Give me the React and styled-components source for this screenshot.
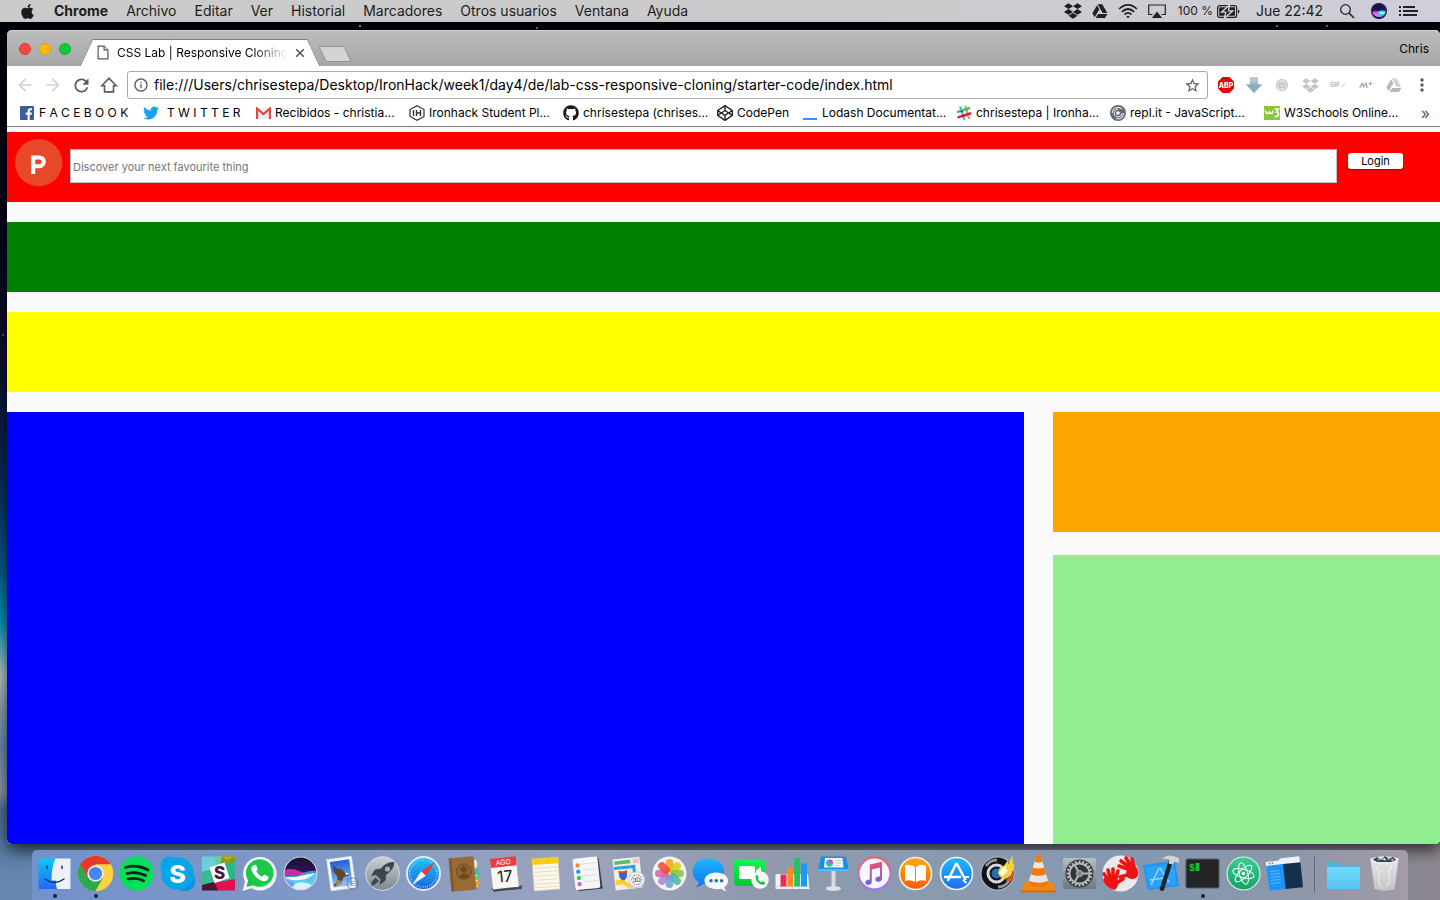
import React from "react";
import styled, { createGlobalStyle } from "styled-components";
import { FaApple, FaDropbox, FaGithub, FaTwitter, FaCodepen } from "react-icons/fa";
import { MdArrowBack, MdArrowForward, MdRefresh, MdStarBorder, MdInfoOutline, MdMoreVert } from "react-icons/md";

const GlobalStyle = createGlobalStyle`
  *, *::before, *::after { box-sizing: border-box; }
  body { margin: 0; font-family: Inter, "Liberation Sans", sans-serif; color: #000; }
  button, input { font: inherit; color: inherit; }
  button { border: 0; padding: 0; background: none; }
  a { color: inherit; text-decoration: none; }
  svg { display: block; flex: none; }
`;

const Desktop = styled.div`
  min-height: 100vh;
  display: flex;
  flex-direction: column;
  overflow: hidden;
  background:
    radial-gradient(circle at 360px 26px, #8a8a99 0 1px, transparent 1px),
    radial-gradient(circle at 537px 28px, #5b6aa0 0 1px, transparent 1px),
    radial-gradient(circle at 1277px 26px, #6b6ba8 0 1px, transparent 1px),
    radial-gradient(circle at 1327px 26px, #6060b0 0 1px, transparent 1px),
    radial-gradient(circle at 3px 335px, #55566e 0 1px, transparent 1px),
    linear-gradient(to right, transparent, #8c8791) bottom / 100% 80px no-repeat,
    linear-gradient(to bottom, #020106 0%, #05041a 25%, #0c1233 42%, #0c2e5c 54%, #075c8c 63%,
      #0496ba 69%, #b4cbcd 75%, #8ca3b5 79%, #6d8cae 83%, #919ab0 88%, #4d7098 90%, #6688b0 98%);
`;

/* ---------- menu bar ---------- */

const MenuBar = styled.header`
  height: 22px;
  display: flex;
  align-items: center;
  justify-content: space-between;
  padding: 0 22px 0 19px;
  background: linear-gradient(to right, #cbcbcb, #cbcbcd 60%, #cfced9);
  color: #1c1c1c;
  font-size: 14px;
  line-height: 22px;
  white-space: nowrap;
`;

const MenuGroup = styled.nav`
  display: flex;
  align-items: center;
  gap: 18px;
`;

const MenuItem = styled.button`
  font-weight: ${(p) => (p.$strong ? 700 : 400)};
`;

const StatusGroup = styled.div`
  display: flex;
  align-items: center;
  gap: ${(p) => p.$gap}px;
`;

const Percent = styled.span`
  font-size: 12px;
`;

const Clock = styled.time`
  font-weight: 400;
`;

/* ---------- browser window ---------- */

const BrowserWindow = styled.main`
  flex: 1;
  display: flex;
  flex-direction: column;
  margin: 8px 0 6px 7px;
  border-radius: 5px;
  overflow: hidden;
  background: #fff;
  box-shadow: 0 6px 16px rgba(0, 0, 0, 0.7);
`;

const TabStrip = styled.div`
  height: 36px;
  display: flex;
  align-items: flex-end;
  padding: 0 11px 0 12px;
  border-top: 1px solid #d2d2d2;
  background: linear-gradient(#bcbcbc, #a6a6a6);
  font-size: 12px;
`;

const Lights = styled.div`
  display: flex;
  gap: 8px;
  align-self: center;
  margin-right: 15px;
`;

const Light = styled.button`
  width: 12px;
  height: 12px;
  border-radius: 50%;
  background: ${(p) => p.$color};
  border: 1px solid ${(p) => p.$edge};
`;

const Tab = styled.div`
  position: relative;
  isolation: isolate;
  width: 228px;
  height: 27px;
  display: flex;
  align-items: center;
  padding: 0 9px 0 11px;
  &::before, &::after {
    content: "";
    position: absolute;
    z-index: -1;
    top: 0;
    bottom: 0;
    width: 60%;
    background: #fff;
    border-top: 1px solid #808080;
  }
  &::before { left: 0; transform: skewX(-25deg); border-left: 1px solid #808080; }
  &::after { right: 0; transform: skewX(25deg); border-right: 1px solid #808080; }
`;

const TabTitle = styled.span`
  flex: 1;
  margin: 0 8px;
  white-space: nowrap;
  overflow: hidden;
  mask-image: linear-gradient(to right, #000 80%, transparent);
`;

const CloseTab = styled.button`
  display: flex;
`;

const NewTab = styled.button`
  width: 26px;
  height: 16px;
  margin: 0 auto 4px 8px;
  border: 1px solid #949494;
  border-radius: 2px;
  background: #d3d3d3;
  transform: skewX(25deg);
`;

const Profile = styled.button`
  align-self: center;
`;

const Toolbar = styled.div`
  display: flex;
  align-items: center;
  padding: 5px 4px 2px;
`;

const ToolButton = styled.button`
  width: 28px;
  height: 28px;
  display: flex;
  align-items: center;
  justify-content: center;
  color: ${(p) => (p.$off ? "#d3d3d3" : "#5a5a5a")};
`;

const AddressBar = styled.label`
  flex: 1;
  height: 28px;
  display: flex;
  align-items: center;
  gap: 5px;
  margin: 0 4px;
  padding: 0 6px 0 5px;
  border: 1px solid #a9a9a9;
  border-radius: 3px;
  color: #5a5a5a;
`;

const AddressInput = styled.input`
  flex: 1;
  min-width: 0;
  padding: 0 0 2px;
  border: 0;
  outline: 0;
  color: #000;
  font-size: 14px;
`;

const Bookmarks = styled.nav`
  height: 26px;
  display: flex;
  align-items: center;
  padding: 0 10px 2px 13px;
  border-bottom: 1px solid #7f7f7f;
  font-size: 12px;
  white-space: nowrap;
`;

const Bookmark = styled.a`
  flex: 0 0 ${(p) => p.$width}px;
  display: flex;
  align-items: center;
  gap: ${(p) => p.$gap || 4}px;
`;

const MoreBookmarks = styled.button`
  margin-left: auto;
  color: #5a5a5a;
  font-size: 16px;
  line-height: 16px;
`;

/* ---------- page in the browser ---------- */

const Page = styled.div`
  flex: 1;
  display: flex;
  flex-direction: column;
  gap: 20px;
  padding-top: 5px;
  background: #fafafa;
`;

const SiteHeader = styled.header`
  height: 70px;
  display: flex;
  align-items: flex-start;
  padding: 7px 37px 0 8px;
  background: red;
  font-size: 11px;
`;

const SearchBox = styled.input`
  flex: 1;
  height: 34px;
  margin: 10px 11px 0 7px;
  padding: 1px 2px 0;
  border: 1px solid #c0c0c0;
  border-radius: 0;
  outline: 0;
  background: #fff;
  &::placeholder { color: #757575; opacity: 1; }
`;

const LoginButton = styled.button`
  width: 55px;
  height: 16px;
  margin-top: 14px;
  border-radius: 3px;
  background: #fff;
  box-shadow: 0 1px 1px rgba(0, 0, 0, 0.35);
  line-height: 16px;
`;

const Band = styled.section`
  height: ${(p) => p.$height}px;
  background: ${(p) => p.$color};
`;

const Columns = styled.div`
  flex: 1;
  display: flex;
  justify-content: space-between;
`;

const MainColumn = styled.section`
  width: 71%;
  background: blue;
`;

const SideColumn = styled.aside`
  width: 27%;
  display: flex;
  flex-direction: column;
  gap: 23px;
`;

const SideFill = styled.section`
  flex: 1;
  background: lightgreen;
`;

/* ---------- dock ---------- */

const Dock = styled.nav`
  height: 50px;
  align-self: center;
  display: flex;
  padding: 3px 3px 0 2px;
  border-radius: 5px 5px 0 0;
  background: linear-gradient(to right, #7391cb, #7f98c6 20%, #9ba4bd 40%, #9199ad 52%, #8a9aaf 64%, #8498b0 82%, #8d97aa 92%, #a39ba6);
`;

const DockButton = styled.button`
  width: 41px;
  display: flex;
  flex-direction: column;
  align-items: center;
  &::after {
    content: "";
    width: 4px;
    height: 4px;
    border-radius: 50%;
    background: ${(p) => (p.$running ? "#10203f" : "transparent")};
  }
`;

const DockDivider = styled.hr`
  width: 1px;
  height: 36px;
  margin: 4px 8px 0 9px;
  border: 0;
  background: #5d6878;
`;

/* ---------- small icons ---------- */

const DriveIcon = ({ size = 16, dim }) => (
  <svg width={size} height={size} viewBox="0 0 24 24" fill={dim ? "#b8b8b8" : "#222"}>
    <path d="M8.500 2h7l7.500 13h-7z" opacity={dim ? 0.6 : 1} />
    <path d="M7.500 3.500 11 9.500 4 21.500.5 15.500z" />
    <path d="M9 16.500h14L19.500 22.500H5.500z" />
  </svg>
);

const WifiIcon = () => (
  <svg width="20" height="16" viewBox="0 0 20 16" fill="none" stroke="#222" strokeWidth="1.7">
    <path d="M1 6Q10-2.300 19 6M3.800 8.800Q10 3.200 16.200 8.800M6.600 11.500Q10 8.400 13.400 11.500" />
    <path d="M8.300 13.400Q10 12 11.700 13.400L10 15.200z" fill="#222" stroke="none" />
  </svg>
);

const AirplayIcon = () => (
  <svg width="18" height="15" viewBox="0 0 18 15">
    <path d="M4.500 10.500H.7V1h16.600v9.500h-3.800" fill="none" stroke="#222" strokeWidth="1.2" />
    <path d="M9 7.500l5.200 6.500H3.800z" fill="#222" />
  </svg>
);

const BatteryIcon = () => (
  <svg width="23" height="13" viewBox="0 0 23 13">
    <rect x=".6" y=".6" width="19" height="11.8" rx="2" fill="none" stroke="#222" strokeWidth="1.2" />
    <rect x="2.2" y="2.2" width="15.8" height="8.6" rx=".5" fill="#222" />
    <path d="M21 4.500q1.500.3 1.500 2t-1.500 2z" fill="#222" />
    <path d="M12.500 0 4.500 7.200h4.300L7.500 13 15.800 5.800H11.500z" fill="#222" stroke="#d8d7df" strokeWidth="1.3" />
  </svg>
);

const SearchIcon = () => (
  <svg width="16" height="16" viewBox="0 0 16 16" fill="none" stroke="#222" strokeWidth="1.3">
    <circle cx="6.5" cy="6.5" r="4.8" />
    <path d="M10 10l5 5" strokeWidth="1.6" />
  </svg>
);

const SiriOrb = () => (
  <svg width="16" height="16" viewBox="0 0 16 16">
    <circle cx="8" cy="8" r="8" fill="#1a1352" />
    <path d="M1 9Q5 6 8 9l-1 5q-5-1-6-5z" fill="#c42be0" />
    <path d="M6 9q4-3 9-1-1 6-7 6-3-2-2-5z" fill="#39c6ee" />
    <path d="M2 9q4 0 6 5-5 0-6-5z" fill="#e56bf2" />
    <path d="M8 10q3-2 6 0-3 2-6 0z" fill="#e6fbff" />
  </svg>
);

const ListIcon = () => (
  <svg width="19" height="12" viewBox="0 0 19 12" fill="#222">
    <path d="M0 1h2v2H0zM4 1h12v2H4zM0 5h2v2H0zM4 5h15v2H4zM0 9h2v2H0zM4 9h14v2H4z" />
  </svg>
);

const PageIcon = () => (
  <svg width="12" height="15" viewBox="0 0 12 15" fill="#fff" stroke="#555" strokeWidth="1.2">
    <path d="M1.100 1.100h6l3.800 3.800v9H1.100z" />
    <path d="M7.100 1.100v3.800h3.800" />
  </svg>
);

const CrossIcon = () => (
  <svg width="10" height="10" viewBox="0 0 10 10" stroke="#555" strokeWidth="1.6">
    <path d="M1.200 1.200l7.600 7.600M8.800 1.200l-7.600 7.600" />
  </svg>
);

const HomeIcon = () => (
  <svg width="18" height="18" viewBox="0 0 18 18" fill="none" stroke="#5a5a5a" strokeWidth="1.6">
    <path d="M1.800 9.800 9 2.200l7.200 7.600h-2.700v6.100h-9V9.800z" />
  </svg>
);

const AbpIcon = () => (
  <svg width="18" height="18" viewBox="0 0 18 18">
    <path d="M5.600 1h6.800L17 5.600v6.800L12.400 17H5.600L1 12.400V5.600z" fill="#e60000" />
    <text x="9" y="11.800" fontSize="7" fontWeight="800" fill="#fff" textAnchor="middle">ABP</text>
  </svg>
);

const DownloadIcon = () => (
  <svg width="18" height="18" viewBox="0 0 18 18">
    <path d="M5 1.500h8v7h4L9 17 1 8.500h4z" fill="#9dbcc6" />
    <path d="M5 1.500h8V6H5z" fill="#b5c4c9" />
    <path d="M1 8.500h16L9 17z" fill="#86aeb9" />
  </svg>
);

const ForumIcon = () => (
  <svg width="14" height="14" viewBox="0 0 14 14" fill="none" stroke="#c2c2c2" strokeWidth="1.1">
    <circle cx="7" cy="7" r="5.5" fill="#e8e8e8" />
    <path d="M4 5q3-1.500 6 0v4q-3 1.500-6 0zM4 5l6 4M10 5l-6 4" />
  </svg>
);

const GifIcon = () => (
  <svg width="16" height="10" viewBox="0 0 16 10">
    <text x="0" y="7" fontSize="6" fontWeight="700" fill="#b5b5b5">GIF</text>
    <path d="M11 6.500l1.500-2M13 6.500l2-3" stroke="#d5d5d5" />
  </svg>
);

const MPlusIcon = () => (
  <svg width="14" height="10" viewBox="0 0 14 10" fill="none" stroke="#aaa" strokeWidth="1.4" strokeLinejoin="round">
    <path d="M.8 8 3.200 3 4.600 7 7 3q1 2 .8 5" />
    <path d="M11.500 1.500v4M9.500 3.500h4" strokeWidth="1" />
  </svg>
);

const FacebookIcon = () => (
  <svg width="14" height="14" viewBox="0 0 14 14">
    <rect width="14" height="14" rx="1" fill="#3f5b9a" />
    <path d="M9.700 14V8.700h1.900l.3-2.100H9.700V5.300c0-.7.3-1.100 1.100-1.100h1.200V2.300Q11.400 2.200 10.400 2.200 7.600 2.200 7.600 5v1.600H5.700v2.100h1.900V14z" fill="#fff" />
  </svg>
);

const GmailIcon = () => (
  <svg width="15" height="12" viewBox="0 0 15 12">
    <rect x="1" y="1" width="13" height="11" fill="#ececec" />
    <path d="M1 12V1.500L7.500 7 14 1.500V12" fill="none" stroke="#d54b3d" strokeWidth="2.2" />
  </svg>
);

const IronhackIcon = () => (
  <svg width="16" height="16" viewBox="0 0 16 16" fill="none" stroke="#333" strokeWidth="1.2">
    <path d="M8 .8 15 4.500v7L8 15.200 1 11.500v-7z" />
    <path d="M4.500 5v6M7.500 5v6M11.500 5v6M7.500 8h4" strokeWidth="1.4" />
  </svg>
);

const LodashIcon = () => (
  <svg width="15" height="16" viewBox="0 0 15 16">
    <rect x="0" y="13" width="14" height="2" fill="#3492ff" />
  </svg>
);

const SlackHash = () => (
  <svg width="16" height="16" viewBox="0 0 16 16" fill="none" strokeWidth="2.4" strokeLinecap="round">
    <path d="M4.500 2.500 8 13.800" stroke="#4fbfc9" />
    <path d="M9.500 1.800 13 13" stroke="#e9a820" />
    <path d="M1.800 6.800l11.500-3.600" stroke="#3eb890" />
    <path d="M2.500 12.200l11.800-3.700" stroke="#e01563" />
    <path d="M5.700 6.200l.3 1M7 10.500l.3 1" stroke="#2a3a3a" strokeLinecap="butt" />
  </svg>
);

const ReplIcon = () => (
  <svg width="16" height="16" viewBox="0 0 16 16" fill="none">
    <circle cx="8" cy="8" r="8" fill="#5f6b74" />
    <circle cx="8" cy="8" r="1.8" fill="#fff" />
    <path d="M8 4.200A3.800 3.800 0 1 0 11.800 8M2.300 8A5.700 5.700 0 0 1 12 4M13.700 8A5.700 5.700 0 0 1 6 13.500" stroke="#d8dde0" strokeWidth="1.2" />
  </svg>
);

const W3Icon = () => (
  <svg width="16" height="14" viewBox="0 0 16 14" fill="none" stroke="#fff" strokeWidth="1.5">
    <rect width="16" height="14" fill="#8ac53e" stroke="none" />
    <path d="M1.500 4.500q0 3 2 3t1.700-2.500q.2 2.500 2 2.500T9 4.500" />
    <path d="M10.500 3h4l-2 3q2.200.2 2 2.500-.5 2.500-4 2" />
  </svg>
);

const ProductLogo = () => (
  <svg width="48" height="48" viewBox="0 0 48 48" role="img" aria-label="Product Hunt">
    <circle cx="23.7" cy="23.7" r="23.7" fill="#e8472a" />
    <path d="M18.200 16.500V35M18.200 18.500h6.300a4.300 4.300 0 0 1 0 8.700h-6.300" fill="none" stroke="#fff" strokeWidth="4" />
  </svg>
);

/* ---------- dock icons, each on a 41 × 41 grid ---------- */

const Gradient = ({ id, from, to }) => (
  <linearGradient id={id} x1="0" y1="0" x2="0" y2="1">
    <stop offset="0" stopColor={from} />
    <stop offset="1" stopColor={to} />
  </linearGradient>
);

const SharedGradients = () => (
  <svg width="0" height="0" aria-hidden="true">
    <defs>
      <Gradient id="finder" from="#08c9fb" to="#2268f5" />
      <Gradient id="silver" from="#c9d3d6" to="#7d868c" />
      <Gradient id="safari" from="#1fc4f5" to="#1d62dd" />
      <Gradient id="bubble" from="#1fb6ff" to="#0b76f0" />
      <Gradient id="green" from="#13f64c" to="#06c92f" />
      <Gradient id="books" from="#ffab08" to="#fb5a03" />
      <Gradient id="store" from="#1fb8fb" to="#1c6ef3" />
      <Gradient id="tunes" from="#fb4a6a" to="#5a6cf0" />
      <Gradient id="ring" from="#fb5c74" to="#8f7bfb" />
      <Gradient id="sky" from="#1d62d8" to="#8fc4f5" />
      <Gradient id="orb" from="#1b0e33" to="#4b1d7b" />
      <Gradient id="atom" from="#3ecb92" to="#12a368" />
      <Gradient id="gear" from="#b6bfc5" to="#6e777d" />
      <Gradient id="folder" from="#74dafa" to="#52c5f0" />
      <Gradient id="bin" from="#e4e5e7" to="#c3c5c8" />
      <clipPath id="orbClip"><circle cx="20.5" cy="20.5" r="16.5" /></clipPath>
    </defs>
  </svg>
);

const petals = ["#fba11c", "#d9cf1a", "#8cc63e", "#4fb89a", "#6aa5dc", "#a98ad0", "#d5679f", "#ef4b3c"];
const teeth = Array.from({ length: 20 }, (_, i) => i * 18);

const finder = (
  <>
    <rect x="4.5" y="5.5" width="32" height="30.5" rx="1" fill="url(#finder)" />
    <path d="M21.500 5.500H36.500V36H23q-1.200-4-1.200-8.500H17.500Q17.500 14 21.500 5.500z" fill="#eef2f8" />
    <path d="M13 12.500v3.500M28 12.500v3.500" stroke="#122c4c" strokeWidth="1.4" />
    <path d="M11 26q9.500 7 19 0" fill="none" stroke="#122c4c" strokeWidth="1.4" strokeLinecap="round" />
  </>
);
const chrome = (
  <>
    <circle cx="20.5" cy="20.5" r="17.7" fill="#ffd44a" />
    <path d="M5.200 11.600a17.700 17.700 0 0 1 30.600 0H20.500z" fill="#e33b2e" />
    <path d="M5.200 11.600a17.700 17.700 0 0 0 15.300 26.600l7.600-13.300L20.500 20.500 12.900 24.900z" fill="#2da94f" />
    <path d="M35.800 11.600H20.500v8.900l7.600 4.400-7.600 13.300A17.700 17.700 0 0 0 35.800 11.600z" fill="#fdd23f" />
    <path d="M5.200 11.600 12.900 24.900 20.500 20.500V11.600L7.500 8.500z" fill="#e33b2e" />
    <path d="M5.200 11.600 12.900 24.900l4 1.600-7 7A17.700 17.700 0 0 1 5.200 11.600z" fill="#2da94f" />
    <circle cx="20.5" cy="20.5" r="8.2" fill="#f4f4f4" />
    <circle cx="20.5" cy="20.5" r="6.6" fill="#4a86f0" />
  </>
);
const spotify = (
  <>
    <circle cx="20.5" cy="20.5" r="17.3" fill="#05df5d" />
    <path d="M9.500 14.500q11.500-3.500 22.500 2.500M11 20.500q10-2.600 18.500 2M12 26q8.500-2 15.500 1.800" fill="none" stroke="#0d2414" strokeWidth="2.8" strokeLinecap="round" />
  </>
);
const skype = (
  <>
    <circle cx="13" cy="13" r="9.8" fill="#0ca4e8" />
    <circle cx="28" cy="28" r="10.3" fill="#0896dc" />
    <circle cx="20.5" cy="20.5" r="16.2" fill="#05a6e9" />
    <text x="20.5" y="29.5" fontSize="25" fontWeight="800" textAnchor="middle" fill="#fff">S</text>
  </>
);
const slack = (
  <>
    <path d="M4 3.500h33v34H4z" fill="#3eb890" />
    <path d="M4 3.500h20L20 14 4 19z" fill="#72cbdc" />
    <path d="M16 3.500h8V14h-6z" fill="#6ecb9c" />
    <path d="M24 3.500h13V9L22 13z" fill="#8a9c12" />
    <path d="M24 3.500H37L29 7z" fill="#d3a51a" />
    <path d="M37 8v18l-8 3-5-17z" fill="#2cb98a" />
    <path d="M37 26v11.500H18L15 30z" fill="#e40f50" />
    <path d="M4 32l12-3 4 8.500H4z" fill="#4b1438" />
    <path d="M11.500 14.500l15-5 5 15.500-15 5z" fill="#fff" />
    <text x="21.5" y="26" fontSize="17" fontWeight="800" textAnchor="middle" fill="#47163b">S</text>
  </>
);
const whatsapp = (
  <>
    <path d="M3.500 38 6 28.500A16.800 16.800 0 1 1 12.500 35.300z" fill="#f5f6f5" />
    <path d="M7.500 34l1.600-6.500A13.800 13.800 0 1 1 14.200 32.200z" fill="#1bc84d" />
    <path d="M14.500 12.500q2-1.500 3 .5l1.200 3q-.3 1.300-1.500 2.200 2 4 6 5.500l2-2.200 4.300 2.200q.5 3-3 4.300-4.500 1-9.500-4-5.500-5.500-4.500-9.500.8-1.500 2-2z" fill="#fff" />
  </>
);
const siri = (
  <>
    <circle cx="20.5" cy="20.5" r="16.8" fill="url(#orb)" />
    <g clipPath="url(#orbClip)">
      <path d="M2 18q9-4 17 0t19-1v10H2z" fill="#c0309f" />
      <path d="M3 24q9-2 15-1 8-6 20-5v20H3z" fill="#2c9be0" />
      <path d="M3 25q10 0 17-2 10 0 18-4v19H3z" fill="#5cc9f2" />
      <path d="M5 24q9 1 15-1 8-2 15-3-6 6-15 7-10 1-15-3z" fill="#fff" />
      <path d="M10 33q11-7 22-1l-8 6h-9z" fill="#d5f5ff" />
      <path d="M4 27q7 0 11 4l-4 5-8-5z" fill="#6f9df8" />
    </g>
    <circle cx="20.5" cy="20.5" r="16.5" fill="none" stroke="#d4d5e0" strokeWidth="1.2" />
  </>
);
const mail = (
  <g transform="rotate(-8 20.5 20.5)">
    <rect x="8" y="5" width="24.5" height="31" fill="#f6f6f6" stroke="#f6f6f6" strokeWidth="1.5" strokeDasharray="1.5 1" />
    <rect x="10.5" y="7.5" width="19.5" height="26" fill="url(#sky)" />
    <path d="M13 11l4 4 4 1 3 4 4 .5-1 3-5 1-3 5-6 3-2-1 4-4 1-4-3-6z" fill="#5f4630" />
    <path d="M15 26l5 2-1 3-6 1z" fill="#a8824d" />
    <path d="M24 20l4.500 1-3.500 2z" fill="#fff" />
    <circle cx="30" cy="32" r="5.5" fill="none" stroke="#53617c" strokeWidth="1" opacity=".6" />
    <path d="M27 30h6M27 32h6M27 34h6" stroke="#53617c" strokeWidth=".6" opacity=".7" />
  </g>
);
const launchpad = (
  <>
    <circle cx="20.5" cy="20.5" r="16.8" fill="url(#silver)" stroke="#d6dbde" />
    <path d="M32.500 9q-8-1-13.500 6.500l-6 1-4 6.500 5-1 4.500 4.500-1 5.500 6-4.500.5-5.500Q32 17 32.500 9z" fill="#3f454b" />
    <circle cx="25.5" cy="16" r="2.6" fill="#a5aeb3" />
    <path d="M13.500 24.500l3.500 3.500-5 4-3 .5 1-4z" fill="#3f454b" />
  </>
);
const safari = (
  <>
    <circle cx="20.5" cy="20.5" r="16.5" fill="url(#safari)" stroke="#e5eaf0" strokeWidth="2" />
    <circle cx="20.5" cy="20.5" r="13.5" fill="none" stroke="#9fe0fb" strokeWidth="2" strokeDasharray=".6 1.5" />
    <path d="M32 9 22.800 22.800l-4.600-4.600z" fill="#f3372f" />
    <path d="M9 32l9.200-13.800 4.600 4.600z" fill="#f4f5f7" />
  </>
);
const contacts = (
  <g transform="rotate(-5 20.5 20.5)">
    <path d="M28 8h5v27h-5z" fill="#eee" />
    <path d="M31 9h3v6h-3z" fill="#e9e4d8" />
    <path d="M31 16h3.500v7H31z" fill="#35c3ae" />
    <path d="M31 24h3.500v4H31z" fill="#5fcf6c" />
    <path d="M31 29h3.500v5H31z" fill="#f29b31" />
    <rect x="6" y="4" width="25" height="33.5" rx="1.5" fill="#986a36" />
    <rect x="6" y="4" width="3" height="33.5" rx="1" fill="#855a2b" />
    <circle cx="20" cy="18.5" r="7.5" fill="#8f6230" stroke="#76501f" />
    <circle cx="20" cy="16.5" r="3" fill="#6d4a1f" />
    <path d="M14.500 23.500q5.500-6 11 0-5.500 4.500-11 0z" fill="#6d4a1f" />
  </g>
);
const calendar = (
  <g transform="rotate(-6 20.5 20.5)">
    <path d="M5 34h31l-1 3.500H7z" fill="#474b52" />
    <rect x="6.5" y="5.5" width="26" height="29.5" fill="#f7f7f7" />
    <path d="M6.500 4.500h26v9h-26z" fill="#ee3a3e" />
    <text x="19.5" y="11.6" fontSize="7" textAnchor="middle" fill="#fff">AGO</text>
    <text x="19.5" y="29" fontSize="16" textAnchor="middle" fill="#222">17</text>
    <path d="M32.500 6l2.500 28h-2.500z" fill="#a4a7ac" />
  </g>
);
const notes = (
  <g transform="rotate(-4 20.5 20.5)">
    <rect x="7" y="5" width="26" height="32" fill="#fbf7ea" stroke="#d8c98e" strokeWidth=".6" />
    <path d="M7 5h26v6H7z" fill="#fdcc12" />
    <path d="M8 14.500h24M8 18.500h24M8 22.500h24M8 26.500h24M8 30.500h24M8 34h24" stroke="#d9d4c3" strokeWidth=".7" />
  </g>
);
const reminders = (
  <g transform="rotate(-6 20.5 20.5)">
    <path d="M9 6h24l1 31H10z" fill="#3a3b3d" />
    <rect x="7" y="4.5" width="25" height="31.5" rx="2" fill="#f6f6f7" />
    <path d="M15 16.500h16M15 22.500h16M15 28.500h16M15 10.500h16" stroke="#d6d6d8" strokeWidth=".7" />
    <circle cx="11.5" cy="11.5" r="2.2" fill="#fb8b1d" />
    <circle cx="11.5" cy="17.7" r="2.2" fill="#1c9bf0" />
    <circle cx="11.5" cy="24" r="2.2" fill="#2fd14d" />
    <circle cx="11.5" cy="30.2" r="2.2" fill="#c65fe0" />
  </g>
);
const maps = (
  <g transform="rotate(-6 20.5 20.5)">
    <rect x="6" y="5" width="27" height="31" fill="#f1eee3" />
    <path d="M7.500 7h16v3.500h-16z" fill="#58c06c" />
    <path d="M26 6.500h6V11h-6z" fill="#f5b8c4" />
    <path d="M6.500 14h20v14" fill="none" stroke="#2ba2e4" strokeWidth="3" />
    <path d="M7 26h8l9 9h-5L14 31H7z" fill="#fbd02e" />
    <path d="M11 17q4 2 8 0v5q-1 4-4 5-4-1.500-4-5z" fill="#3b66cf" />
    <path d="M11 17q4 2 8 0v2.500h-8z" fill="#e0402f" />
    <circle cx="28" cy="27.5" r="7.8" fill="#f3f5f7" stroke="#c5c9ce" />
    <circle cx="28" cy="27.5" r="5" fill="none" stroke="#7d8893" strokeDasharray="1.5 1" />
    <text x="28" y="29.8" fontSize="6" textAnchor="middle" fill="#333">3D</text>
  </g>
);
const photos = (
  <>
    <circle cx="20.5" cy="20.5" r="17" fill="#f3f3f3" />
    {petals.map((color, i) => (
      <rect key={color} x="16.7" y="6" width="7.6" height="13.5" rx="3.8" fill={color} opacity=".88" transform={`rotate(${i * 45} 20.5 20.5)`} />
    ))}
  </>
);
const messages = (
  <>
    <path d="M18 5.500c9.500 0 16 5.500 16 13S27.500 31.500 18 31.500q-2.500 0-5-.6-3 3.200-7 3 2.500-2 2.800-5Q2.500 25.500 2.500 18.500c0-7.500 6-13 15.500-13z" fill="url(#bubble)" />
    <path d="M26 19.500c7 0 12 3.500 12 8.300 0 3-1.500 5-3.600 6.300.2 2 1 3 2 4q-3 0-5-2.400-2.400.6-5.400.4c-7-.3-11.500-3.700-11.500-8.300s4.500-8.300 11.500-8.300z" fill="#f5f7fa" />
    <circle cx="21" cy="27.8" r="1.8" fill="#2b6fae" />
    <circle cx="26.3" cy="27.8" r="1.8" fill="#2b6fae" />
    <circle cx="31.6" cy="27.8" r="1.8" fill="#2b6fae" />
  </>
);
const facetime = (
  <>
    <rect x="3" y="6" width="31" height="27" rx="4" fill="url(#green)" />
    <rect x="8" y="13" width="16" height="13" rx="2" fill="#fff" />
    <path d="M25 17.500l5-4v12l-5-4z" fill="#fff" />
    <circle cx="29" cy="27" r="8.7" fill="#f6f7f6" />
    <path d="M25 22.500q1.500-1 2 .2l.8 2-1 1.300q1.300 2.300 3.500 3.200l1.300-1.200 2.400 1.400q0 2-2 2.500-3 0-5.500-3-2.800-3.300-1.500-6.400z" fill="#10c637" />
  </>
);
const numbers = (
  <>
    <path d="M3.500 22 5 21h31l1.500 15H3.500z" fill="#f2f3f4" />
    <path d="M4 33h33M9 33v3M15 33v3M21 33v3M27 33v3" stroke="#c3c6ca" strokeWidth=".8" />
    <rect x="8.5" y="21.5" width="6" height="12" fill="#e42f52" />
    <rect x="15.3" y="14.5" width="6" height="19" fill="#fb8c1c" />
    <rect x="22.2" y="5" width="6" height="28.5" fill="#23c266" />
    <rect x="29" y="10.5" width="6" height="23" fill="#1c97f2" />
  </>
);
const keynote = (
  <>
    <path d="M18.500 17h4v18h-4z" fill="#d9dde2" />
    <ellipse cx="20.5" cy="35.5" rx="7.5" ry="2.3" fill="#dfe3e8" />
    <path d="M8 3.500h25l3 14H5z" fill="#178fea" />
    <path d="M5 16h31v2H5z" fill="#5cbbf7" />
    <path d="M12 5h17.500l1 9.500H11z" fill="#f5f7f9" />
    <circle cx="16.5" cy="10" r="3.5" fill="#24b3ee" />
    <path d="M16.500 10V6.500a3.500 3.500 0 0 1 3.500 3.500z" fill="#e84a78" />
    <path d="M16.500 10l2.500 2.500a3.500 3.500 0 0 1-5 0z" fill="#3cc76a" />
    <path d="M22.500 7.500H28M22.500 10h6M22.500 12.500h4" stroke="#b6bcc4" strokeWidth=".8" />
  </>
);
const itunes = (
  <>
    <circle cx="20.5" cy="20.5" r="16" fill="#f7f7fa" stroke="url(#ring)" strokeWidth="2" />
    <path d="M15.800 11.500l12.200-2.800v16.300q0 3.500-3.600 3.800-3 .1-3-2.400 0-3 4.600-3.200V14.500l-8.200 1.900v12.100q0 3.300-3.500 3.500-3 .1-3-2.400 0-3 4.500-3.200z" fill="url(#tunes)" />
  </>
);
const ibooks = (
  <>
    <circle cx="20.5" cy="20.5" r="16" fill="url(#books)" stroke="#f5f0ea" strokeWidth="1.6" />
    <path d="M20 14q-4.500-3.500-10-1.500V28q5.500-2 10 1zM21 14q4.500-3.500 10-1.500V28q-5.500-2-10 1z" fill="#fff" />
  </>
);
const appstore = (
  <>
    <circle cx="20.5" cy="20.5" r="16" fill="url(#store)" stroke="#eef3f8" strokeWidth="1.6" />
    <path d="M20.500 10l-8.800 18M20.500 10l9 17M8 24h17" fill="none" stroke="#fff" strokeWidth="2.4" />
    <path d="M28.500 24h4.500M27 27l3.500 3" stroke="#fff" strokeWidth="2" />
  </>
);
const burn = (
  <>
    <circle cx="20.5" cy="20.5" r="17" fill="#b9bdc1" />
    <circle cx="20.5" cy="20.5" r="16" fill="#121316" />
    <path d="M9 13q4-6 11-6M32 28q-4 6-11 6" fill="none" stroke="#8f959a" strokeWidth="3" />
    <circle cx="19.5" cy="20.5" r="8.5" fill="none" stroke="#d5d9dc" strokeWidth="3" />
    <circle cx="19.5" cy="20.5" r="5" fill="#2470b8" />
    <path d="M21 20q1-6 4-7l1 1 5-7 .5 4 4-9 .5 8 1.500 2-2 7q-2 6-8 7-4 0-6.500-6z" fill="#f4d13c" />
    <path d="M22 20q3-6 7-7-1 4 2 4-3 5-6 6z" fill="#fffbe0" />
    <path d="M28 27q6-2 8-9 1 7-3 11z" fill="#e9542b" />
  </>
);
const vlc = (
  <>
    <path d="M7 28.500h27l4 10H3z" fill="#f2870f" />
    <path d="M3 37.500h35v2H3z" fill="#d86a05" />
    <path d="M18.500 2h4L31 31q-10.500 4.500-21 0z" fill="#e9e5e1" />
    <path d="M18.500 2h4l2 6.800q-4 1.600-8 0zM14.800 14.500q5.700 2.200 11.400 0l2 6.800q-7.700 3-15.400 0zM11 28q9.500 3.500 19 0l1 3.500q-10.500 4.500-21 0z" fill="#f0780f" />
  </>
);
const settings = (
  <>
    <rect x="4" y="5" width="33" height="31" rx="1.5" fill="url(#gear)" />
    <circle cx="20.5" cy="20.5" r="14" fill="#33373b" />
    {teeth.map((a) => (
      <rect key={a} x="19.5" y="7.5" width="2" height="3" fill="#b3b8bc" transform={`rotate(${a} 20.5 20.5)`} />
    ))}
    <circle cx="20.5" cy="20.5" r="10" fill="none" stroke="#b3b8bc" strokeWidth="1.8" />
    <path d="M20.500 20.500h9.500M20.500 20.500l-4.700 8.200M20.500 20.500l-4.700-8.200" stroke="#b3b8bc" strokeWidth="2" />
    <circle cx="20.5" cy="20.5" r="3" fill="#7c8287" stroke="#c3c7ca" />
  </>
);
const hands = (
  <>
    <circle cx="20.5" cy="20.5" r="18" fill="#ece9e9" />
    <g fill="none" stroke="#f01212" strokeWidth="3.6" strokeLinecap="round">
      <path d="M11 30 4 21M11 28 8 17M13 28 13 16M15 28 18 18M15 31 23 26" />
      <path d="M31 17 19 13M31 15 21 8M32 14 26 5M34 14 32 6M31 21 20 24" />
    </g>
    <path d="M5 24q6-4 12 1 3 7-2 12-9-2-12-10z" fill="#f01212" />
    <path d="M27 13q6-3 10 2 3 7-1 10-6 3-10-2z" fill="#f01212" />
  </>
);
const xcode = (
  <>
    <path d="M2 12l32-4 4 25-31 4z" fill="#1d93f2" />
    <path d="M4 14l28.500-3.500 3.500 21L8.500 35z" fill="#2ba4f8" />
    <path d="M18 15l-8 17M19 15l9 14M9 27l18-2.500" fill="none" stroke="#9bd4fb" strokeWidth="1.5" />
    <path d="M28 7l4 1-9 29q-2.500 2-4.500-.5z" fill="#1f2226" />
    <path d="M21 6q5-5 11-3l6 2v5l-4-1.500-2.500 3-4-1 1-4q-3-1-7.500-.5z" fill="#cfd3d7" />
  </>
);
const terminal = (
  <>
    <rect x="4" y="6" width="33" height="29" rx="1.5" fill="#242426" stroke="#55585c" />
    <text x="7" y="17.5" fontSize="10" fontWeight="700" fontFamily="Liberation Mono, monospace" fill="#18d02a">$</text>
    <rect x="13.5" y="10" width="4" height="8" fill="#18c028" />
  </>
);
const atom = (
  <>
    <circle cx="20.5" cy="20.5" r="16.5" fill="url(#atom)" stroke="#d5efe3" strokeWidth="1.2" />
    <g fill="none" stroke="#fff" strokeWidth="1">
      <ellipse cx="20.5" cy="20.5" rx="11" ry="4.2" transform="rotate(15 20.5 20.5)" />
      <ellipse cx="20.5" cy="20.5" rx="11" ry="4.2" transform="rotate(75 20.5 20.5)" />
      <ellipse cx="20.5" cy="20.5" rx="11" ry="4.2" transform="rotate(135 20.5 20.5)" />
    </g>
    <circle cx="20.5" cy="20.5" r="1.8" fill="#fff" />
  </>
);
const commander = (
  <g transform="rotate(-6 20.5 20.5)">
    <path d="M3 7h13l1.500-2H37v7H3z" fill="#eef1f6" />
    <path d="M3 11h17v25H4z" fill="#1c93fb" />
    <path d="M20 11h17.500v25H20z" fill="#15304c" />
    <path d="M6 17h10M6 20h10M6 23h10M6 26h10M6 29h10" stroke="#63bafd" strokeWidth=".9" />
    <circle cx="6.5" cy="9" r=".9" fill="#77808c" />
    <circle cx="9.5" cy="9" r=".9" fill="#77808c" />
  </g>
);
const folder = (
  <>
    <path d="M4 11q0-2 2-2h8l2 3h19q2 0 2 2v21q0 1-1 1H5q-1 0-1-1z" fill="#4ab7e0" />
    <path d="M4 14h33v21q0 1-1 1H5q-1 0-1-1z" fill="url(#folder)" />
  </>
);
const trash = (
  <>
    <path d="M6.500 6.500h28l-4 29.500q-10 3.500-20 0z" fill="url(#bin)" />
    <path d="M6.500 6q14-4.500 28 0-1 4-14 4t-14-4z" fill="#d9dbdd" stroke="#f2f3f4" />
    <path d="M9 6.500 13 4l4 3 4-4 4 3 4-2 3 3-5 2H13z" fill="#3a3f47" />
    <path d="M13 5l3 2-2 1zM23 4l3 2-2 1.500z" fill="#62b8d8" />
    <path d="M18 6l3-1 1 3zM27 6l3 .5-2 1.500z" fill="#f5f5f5" />
    <path d="M12 14q5 4 3 10t3 10M28 13q-5 6-3 11t-3 9" fill="none" stroke="#f3f4f5" strokeWidth="1.2" opacity=".7" />
  </>
);

const dockApps = [
  ["Finder", finder, true], ["Google Chrome", chrome, true], ["Spotify", spotify], ["Skype", skype],
  ["Slack", slack], ["WhatsApp", whatsapp], ["Siri", siri], ["Mail", mail], ["Launchpad", launchpad],
  ["Safari", safari], ["Contactos", contacts], ["Calendario", calendar], ["Notas", notes],
  ["Recordatorios", reminders], ["Mapas", maps], ["Fotos", photos], ["Mensajes", messages],
  ["FaceTime", facetime], ["Numbers", numbers], ["Keynote", keynote], ["iTunes", itunes],
  ["iBooks", ibooks], ["App Store", appstore], ["Burn", burn], ["VLC", vlc],
  ["Preferencias del Sistema", settings], ["Hands", hands], ["Xcode", xcode],
  ["Terminal", terminal, true], ["Atom", atom], ["Commander", commander],
];
const dockPlaces = [["Descargas", folder], ["Papelera", trash]];

const menus = ["Archivo", "Editar", "Ver", "Historial", "Marcadores", "Otros usuarios", "Ventana", "Ayuda"];

const bookmarks = [
  { label: "F A C E B O O K", icon: <FacebookIcon />, width: 123, gap: 5 },
  { label: "T W I T T E R", icon: <FaTwitter size={16} color="#1da1f2" />, width: 113, gap: 8 },
  { label: "Recibidos - christia…", icon: <GmailIcon />, width: 153 },
  { label: "Ironhack Student Pl…", icon: <IronhackIcon />, width: 154 },
  { label: "chrisestepa (chrises…", icon: <FaGithub size={16} color="#1b1b1b" />, width: 154 },
  { label: "CodePen", icon: <FaCodepen size={16} color="#222" />, width: 86 },
  { label: "Lodash Documentat…", icon: <LodashIcon />, width: 153 },
  { label: "chrisestepa | Ironha…", icon: <SlackHash />, width: 154 },
  { label: "repl.it - JavaScript…", icon: <ReplIcon />, width: 154 },
  { label: "W3Schools Online…", icon: <W3Icon />, width: 140 },
];

const DockItem = ({ name, art, running }) => (
  <DockButton aria-label={name} $running={running}>
    <svg width="41" height="41" viewBox="0 0 41 41">{art}</svg>
  </DockButton>
);

export default function App() {
  return (
    <Desktop>
      <GlobalStyle />
      <MenuBar>
        <MenuGroup>
          <FaApple size={17} />
          <MenuItem $strong>Chrome</MenuItem>
          {menus.map((m) => <MenuItem key={m}>{m}</MenuItem>)}
        </MenuGroup>
        <StatusGroup $gap={16}>
          <StatusGroup $gap={12}>
            <StatusGroup $gap={10}>
              <FaDropbox size={18} />
              <DriveIcon />
              <WifiIcon />
              <AirplayIcon />
            </StatusGroup>
            <StatusGroup $gap={4}>
              <Percent>100 %</Percent>
              <BatteryIcon />
            </StatusGroup>
          </StatusGroup>
          <Clock>Jue 22:42</Clock>
          <SearchIcon />
          <StatusGroup $gap={12}>
            <SiriOrb />
            <ListIcon />
          </StatusGroup>
        </StatusGroup>
      </MenuBar>

      <BrowserWindow>
        <TabStrip>
          <Lights>
            <Light aria-label="Cerrar" $color="#fc4642" $edge="#e0322f" />
            <Light aria-label="Minimizar" $color="#fdb90c" $edge="#e0a006" />
            <Light aria-label="Ampliar" $color="#0fcb3c" $edge="#0ab02f" />
          </Lights>
          <Tab>
            <PageIcon />
            <TabTitle>CSS Lab | Responsive Cloning</TabTitle>
            <CloseTab aria-label="Cerrar pestaña"><CrossIcon /></CloseTab>
          </Tab>
          <NewTab aria-label="Nueva pestaña" />
          <Profile>Chris</Profile>
        </TabStrip>

        <Toolbar>
          <ToolButton aria-label="Atrás" $off><MdArrowBack size={20} /></ToolButton>
          <ToolButton aria-label="Adelante" $off><MdArrowForward size={20} /></ToolButton>
          <ToolButton aria-label="Recargar"><MdRefresh size={21} /></ToolButton>
          <ToolButton aria-label="Inicio"><HomeIcon /></ToolButton>
          <AddressBar>
            <MdInfoOutline size={16} />
            <AddressInput
              aria-label="Dirección"
              defaultValue="file:///Users/chrisestepa/Desktop/IronHack/week1/day4/de/lab-css-responsive-cloning/starter-code/index.html"
            />
            <MdStarBorder size={17} />
          </AddressBar>
          <ToolButton aria-label="AdBlock"><AbpIcon /></ToolButton>
          <ToolButton aria-label="Descargas"><DownloadIcon /></ToolButton>
          <ToolButton aria-label="Foro"><ForumIcon /></ToolButton>
          <ToolButton aria-label="Dropbox" $off><FaDropbox size={17} color="#c4c4c4" /></ToolButton>
          <ToolButton aria-label="GIF"><GifIcon /></ToolButton>
          <ToolButton aria-label="M+"><MPlusIcon /></ToolButton>
          <ToolButton aria-label="Drive"><DriveIcon dim /></ToolButton>
          <ToolButton aria-label="Menú"><MdMoreVert size={20} /></ToolButton>
        </Toolbar>

        <Bookmarks>
          {bookmarks.map((b) => (
            <Bookmark key={b.label} href="#" $width={b.width} $gap={b.gap}>
              {b.icon}
              {b.label}
            </Bookmark>
          ))}
          <MoreBookmarks aria-label="Más marcadores">»</MoreBookmarks>
        </Bookmarks>

        <Page>
          <SiteHeader>
            <ProductLogo />
            <SearchBox aria-label="Buscar" placeholder="Discover your next favourite thing" />
            <LoginButton>Login</LoginButton>
          </SiteHeader>
          <Band $height={70} $color="green" />
          <Band $height={80} $color="yellow" />
          <Columns>
            <MainColumn />
            <SideColumn>
              <Band $height={120} $color="orange" />
              <SideFill />
            </SideColumn>
          </Columns>
        </Page>
      </BrowserWindow>

      <Dock>
        {dockApps.map(([name, art, running]) => (
          <DockItem key={name} name={name} art={art} running={running} />
        ))}
        <DockDivider />
        {dockPlaces.map(([name, art]) => <DockItem key={name} name={name} art={art} />)}
      </Dock>
      <SharedGradients />
    </Desktop>
  );
}
